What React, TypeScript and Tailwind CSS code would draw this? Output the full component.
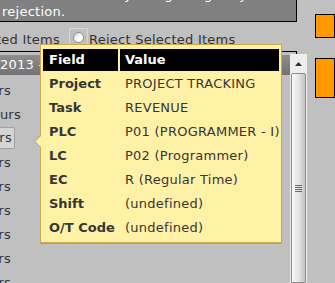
import React from "react";

const details = [
  { field: "Project", value: "PROJECT TRACKING" },
  { field: "Task", value: "REVENUE" },
  { field: "PLC", value: "P01 (PROGRAMMER - I)" },
  { field: "LC", value: "P02 (Programmer)" },
  { field: "EC", value: "R (Regular Time)" },
  { field: "Shift", value: "(undefined)" },
  { field: "O/T Code", value: "(undefined)" },
];

// visible width of each hours cell, the rest sits off the left edge
const hourRows = [
  { width: "w-[11px]", button: false },
  { width: "w-[21px]", button: false },
  { width: "w-[12px]", button: true },
  { width: "w-[11px]", button: false },
  { width: "w-[11px]", button: false },
  { width: "w-[11px]", button: false },
  { width: "w-[11px]", button: false },
  { width: "w-[11px]", button: false },
  { width: "w-[11px]", button: false },
];

const Tooltip: React.FC = () => (
  <div className="absolute left-[40px] top-[44px] w-[242px] h-[199px] bg-[#fff1a6] border border-[#d3a64a] shadow-[0_1px_0_#c9a04a] pt-[2px] text-[#363636]">
    <svg className="absolute left-[-7px] top-[90px]" width="8" height="13" viewBox="0 0 8 13">
      <polygon points="8,0 1,6.5 8,13" fill="#fff1a6" />
      <path d="M7 0 L1 6.5 L7 13" fill="none" stroke="#d3a64a" strokeWidth="1" />
    </svg>
    <div className="grid grid-cols-[75px_159px] gap-[2px] p-[2px]">
      <div className="h-[22px] bg-black text-white font-bold tracking-normal pl-[6px] flex items-center">Field</div>
      <div className="h-[22px] bg-black text-white font-bold tracking-normal pl-[5px] flex items-center">Value</div>
      {details.map((d) => (
        <React.Fragment key={d.field}>
          <div className="h-[22px] font-bold tracking-normal pl-[6px] flex items-center whitespace-nowrap">{d.field}</div>
          <div className="h-[22px] pl-[5px] flex items-center whitespace-nowrap">{d.value}</div>
        </React.Fragment>
      ))}
    </div>
  </div>
);

const Scrollbar: React.FC = () => (
  <div className="w-[17px] h-[229px] bg-[#eeeeee] flex flex-col px-px">
    <div className="h-[19px] flex items-center justify-center">
      <svg width="7" height="4" viewBox="0 0 7 4">
        <polygon points="3.5,0 7,4 0,4" fill="#333" />
      </svg>
    </div>
    <div className="flex-1 border border-[#8c8c8c] rounded-t-[2px] bg-gradient-to-r from-[#fbfbfb] via-[#e4e4e4] to-[#c2c2c2] pt-[111px] flex flex-col items-center gap-px">
      <div className="w-[7px] h-px bg-[#6a6a6a]" />
      <div className="w-[7px] h-px bg-[#6a6a6a]" />
      <div className="w-[7px] h-px bg-[#6a6a6a]" />
      <div className="w-[7px] h-px bg-[#6a6a6a]" />
    </div>
  </div>
);

export default function App() {
  return (
    <div className="relative w-[335px] h-[283px] overflow-hidden bg-[#c0c0c0] font-['DejaVu_Sans',Verdana,sans-serif] text-[13px] tracking-[0.25px] text-[#333]">
      <div className="flex">
        <div className="w-[322px] flex flex-col">
          {/* instructions box */}
          <div className="h-[22px] w-[297px] bg-[#808080] border-r border-b border-black overflow-hidden text-white leading-[17px]">
            <div className="-mt-[14px] pl-[2px] whitespace-nowrap">
              <div>Check the items by using the grid, you</div>
              <div>rejection.</div>
            </div>
          </div>

          {/* approve / reject choice */}
          <div className="h-[29px] flex items-start whitespace-nowrap">
            <div className="w-[60px] mt-[10px] leading-[15px] flex justify-end">Approve Selected Items</div>
            <div className="ml-[9px] mt-[6px] w-[19px] h-[19px] border border-[#d6d6d6] flex items-center justify-center">
              <div className="w-[11px] h-[11px] rounded-full border border-[#8a8a8a] bg-gradient-to-br from-[#d0d0d0] via-white to-white" />
            </div>
            <div className="ml-px mt-[10px] leading-[15px]">Reject Selected Items</div>
          </div>

          {/* hours panel */}
          <div className="h-[3px] w-[297px] border-t border-r border-black" />
          <div className="flex">
            <div className="w-[290px] flex flex-col">
              <div className="mt-px h-[20px] bg-gradient-to-b from-[#8e8e8e] to-[#727272] text-white leading-[20px] whitespace-nowrap">
                2013 - 0
              </div>
              <div className="mt-[4px] flex flex-col">
                {hourRows.map((r, i) => (
                  <div key={i} className="h-[24px] flex items-start">
                    {r.button ? (
                      <div className="h-[22px] w-[15px] pr-[2px] flex items-center justify-end whitespace-nowrap bg-[#d5d5d5] border border-l-0 border-[#a2a2a2] rounded-r-[2px]">
                        Hours
                      </div>
                    ) : (
                      <div className={`${r.width} h-[24px] flex items-center justify-end whitespace-nowrap`}>Hours</div>
                    )}
                  </div>
                ))}
              </div>
            </div>
            <Scrollbar />
          </div>
        </div>

        {/* side buttons */}
        <div className="flex flex-col pt-[14px]">
          <div className="w-[20px] h-[24px] bg-[#ff9900] border border-black" />
          <div className="mt-[20px] w-[20px] h-[40px] bg-[#ff9900] border border-black" />
        </div>
      </div>

      <Tooltip />
    </div>
  );
}
